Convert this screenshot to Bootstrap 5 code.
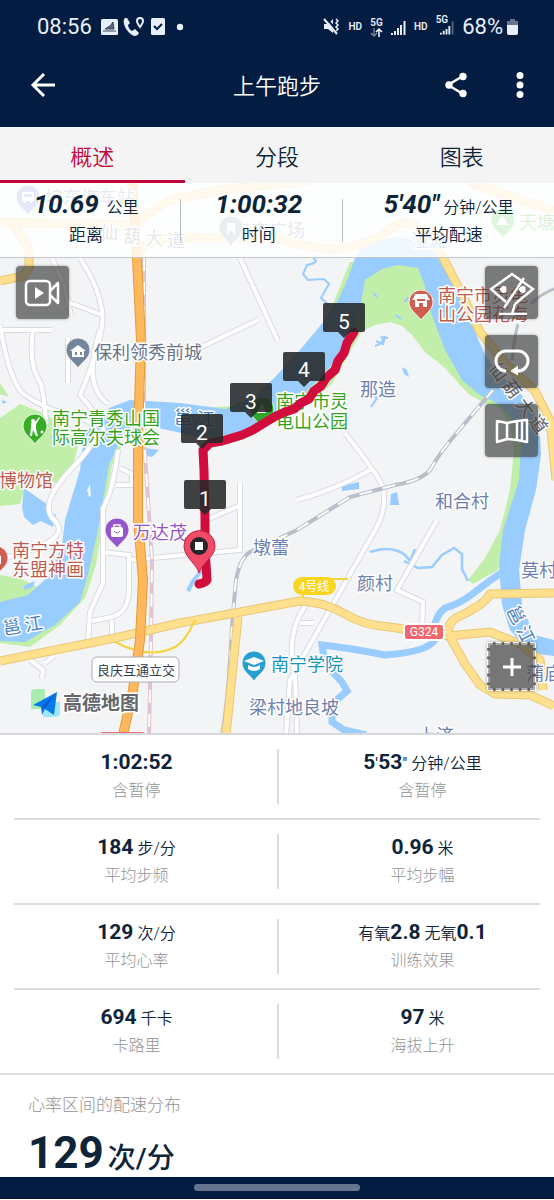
<!DOCTYPE html>
<html lang="zh-CN">
<head>
<meta charset="utf-8">
<meta name="viewport" content="width=device-width, initial-scale=1">
<title>上午跑步</title>
<link href="https://cdn.jsdelivr.net/npm/bootstrap@5.3.0/dist/css/bootstrap.min.css" rel="stylesheet">
<style>
:root{--navy:#021d41;--ink:#0e2439;--red:#c1073a}
body{font-family:Roboto,"Noto Sans CJK SC",sans-serif;color:var(--ink);background:#fff;line-height:1}
svg{display:block;flex:none}
button{color:inherit}
.top-area{background:var(--navy);color:#fff}
.status-line{height:54px;padding:0 36px 0 37px;color:#e8effa}
.clock{font-size:22px;line-height:24px}
.tiny{font-size:10px;line-height:10px;font-weight:600}
.second-signal{margin-left:-8px}
.app-line{height:73px;padding:0 25px 12px;display:grid;grid-template-columns:1fr auto 1fr}
.app-line h1{font-size:22px;line-height:28px;margin:0;padding-top:4px;font-weight:350}
.app-actions{gap:28px;margin-right:-9px}
.icon-btn{background:none;border:0;padding:0;width:36px;height:36px;display:flex;align-items:center;justify-content:center}
.tab-row{background:#f4f4f4;height:56px}
.tab-row button{background:none;border:0;border-bottom:3px solid transparent;font-size:22px;line-height:28px;padding:8px 0 0;font-weight:350}
.tab-row button.active{color:var(--red);border-color:var(--red)}
.map-box{background:#f3f4f6;border-bottom:2px solid #d6d8dc;overflow:hidden}
.map-box>svg{width:100%;height:auto}
.summary{background:rgba(255,255,255,.84);border-bottom:1px solid #c4c6ca;height:75px;padding-top:8px}
.sum-cell{position:relative;text-align:center}
.sum-cell+.sum-cell{border-image:linear-gradient(transparent 9px,#bbbec4 9px,#bbbec4 50px,transparent 50px) 1;border-left:1px solid}
.sum-cell b{font-size:26px;line-height:26px;font-style:italic;font-weight:700;display:inline-block}
.sum-cell p{font-size:17px;line-height:24px;margin:6px 0 0;font-weight:350}
.unit{font-size:16px;font-weight:350}
.c1{flex:0 0 32.5%;padding-right:8px}.c2{flex:0 0 29.3%;padding-right:6px}.c3{flex:1}
.tool{width:53px;height:53px;border:0;border-radius:4px;background:rgba(64,64,64,.68);color:#fff;padding:0;display:flex;align-items:center;justify-content:center;box-shadow:0 0 3px rgba(0,0,0,.35)}
.tools-left{left:16px;top:83px}
.tools-right{right:16px;top:83px;gap:16px}
.tool-add{right:18px;bottom:42px;width:49px;height:49px;border:3px dashed #fff;outline:2px solid rgba(80,80,80,.5);outline-offset:-3px;border-radius:2px;background:rgba(64,64,64,.7)}
.pair{margin:0 14px;border-bottom:2px solid #dcddde;padding:14px 0 14px}
.pair:last-child{margin:0;padding-left:14px;padding-right:14px}
.pair>div{width:50%;text-align:center;height:55px}
.pair>div+div{border-left:2px solid #dcddde}
.pair>div:first-child{padding-right:18px}
.pair>div:last-child{padding-left:26px}
.pair strong{font-size:21px;font-weight:700}
.pair .val{line-height:26px;height:28px}
.pair .cap{font-size:16px;line-height:24px;color:#949494;margin-top:2px;font-weight:300}
.zone{padding:18px 28px 0;height:102px;overflow:hidden}
.zone h2{font-size:17px;line-height:24px;color:#949494;font-weight:300;margin:0 0 8px}
.zone .big{font-size:44px;line-height:56px;font-weight:700}
.zone .big span{font-size:28px;font-weight:500;margin-left:4px}
.home-line{background:var(--navy);height:22px;border-bottom:1px solid #071229}
.home-line div{width:30%;height:7px;border-radius:4px;background:#66758f}
.lab{font-size:18px;paint-order:stroke;stroke:#fff;stroke-width:3px;stroke-linejoin:round;font-family:"Noto Sans CJK SC",sans-serif}
.vil{fill:#6d81b0}.poi{fill:#64758d}.parkc{fill:#34a31b}.sight{fill:#bd5a50}
.km{font-size:21px;fill:#fff;text-anchor:middle}
</style>
</head>
<body>
<header class="top-area">
 <div class="status-line d-flex align-items-center justify-content-between">
  <div class="d-flex align-items-center">
   <span class="clock me-2">08:56</span>
   <svg width="76" height="20" viewBox="98 17 76 20" aria-hidden="true">
    <rect x="99" y="19" width="17" height="16" rx="1.5" fill="#e8effa"/><path d="M101 31h13M103 29h9l-1-7-3 4-2 1z" stroke="#34445c" fill="#5b687b"/>
    <path d="M123 18c-4 4 2 15 9 18 3 0 4-1 5-3l-4-4-3 2c-2-1-4-4-4-6l2-2-3-5z" fill="#e8effa"/><path d="M138 18a3 3 0 0 1 3 3c0 2-3 6-3 6s-3-4-3-6a3 3 0 0 1 3-3z" fill="none" stroke="#e8effa" stroke-width="2"/>
    <rect x="149" y="18" width="14" height="17" rx="1.500" fill="#e8effa"/><path d="m152 26 3 3 5-5" fill="none" stroke="#021d41" stroke-width="2"/>
   </svg>
   <svg width="8" height="8" viewBox="0 0 8 8" aria-hidden="true"><circle cx="4" cy="4" r="3.200" fill="#e8effa"/></svg>
  </div>
  <div class="d-flex align-items-center">
   <svg width="17" height="18" viewBox="0 0 17 18" class="me-2" aria-hidden="true"><path d="M1 6h4l5-5v14l-5-4H1z" fill="#e8effa"/><path d="M3 0l13 15" stroke="#021d41" stroke-width="2"/><path d="M1 1l13 15" stroke="#e8effa" stroke-width="2"/><path d="M13 1l2 2-2 2 2 2-2 2 2 2-2 2" stroke="#e8effa" stroke-width="1.500" fill="none"/></svg>
   <span class="tiny me-2">HD</span>
   <span class="text-center me-2"><span class="tiny d-block">5G</span><svg width="13" height="9" viewBox="0 0 13 9" aria-hidden="true"><path d="M4 0v7M1 5l3 3 3-3" fill="none" stroke="#7888a0" stroke-width="1.300"/><path d="M9 9V2M6 4l3-3 3 3" fill="none" stroke="#fff" stroke-width="1.500"/></svg></span>
   <svg width="15" height="15" viewBox="0 0 15 15" class="me-2" aria-hidden="true"><path d="M1 13v2M4 11v4M7 8v7M10 5v10M13.500 1v14" stroke="#e8effa" stroke-width="2"/></svg>
   <span class="tiny me-2">HD</span>
   <span class="tiny align-self-start">5G</span>
   <svg width="14" height="15" viewBox="0 0 15 15" class="second-signal me-2" aria-hidden="true"><path d="M1 13v2M4 11v4M7 9v6M10 6v9" stroke="#e8effa" stroke-width="2"/><path d="M13.500 1v14" stroke="#53647f" stroke-width="2"/></svg>
   <span class="clock me-1">68%</span>
   <svg width="11" height="16" viewBox="0 0 11 16" aria-hidden="true"><path d="M3 0h5v2h3v6H0V2h3z" fill="#66758d"/><path d="M0 6h11v8q0 2-2 2H2q-2 0-2-2z" fill="#e8effa"/></svg>
  </div>
 </div>
 <nav class="app-line align-items-center">
  <button class="icon-btn" aria-label="返回"><svg width="26" height="26" viewBox="0 0 26 26" fill="none" stroke="#fff" stroke-width="3"><path d="M25 13H3M14 2 3 13l11 11"/></svg></button>
  <h1>上午跑步</h1>
  <div class="app-actions d-flex justify-content-end">
   <button class="icon-btn" aria-label="分享"><svg width="24" height="26" viewBox="0 0 24 26"><path d="M19 4 4 13l15 9" stroke="#fff" stroke-width="2.500" fill="none"/><circle cx="19" cy="4.500" r="3.700" fill="#fff"/><circle cx="5" cy="13" r="3.700" fill="#fff"/><circle cx="19" cy="21.500" r="3.700" fill="#fff"/></svg></button>
   <button class="icon-btn" aria-label="更多"><svg width="8" height="26" viewBox="0 0 8 26" fill="#fff"><circle cx="4" cy="3.600" r="3.500"/><circle cx="4" cy="13" r="3.500"/><circle cx="4" cy="22.400" r="3.500"/></svg></button>
  </div>
 </nav>
</header>
<div class="tab-row d-flex" role="tablist">
 <button class="flex-fill w-100 active" role="tab" aria-selected="true">概述</button>
 <button class="flex-fill w-100" role="tab">分段</button>
 <button class="flex-fill w-100" role="tab">图表</button>
</div>
<main>
<section class="map-box position-relative">
<svg viewBox="0 183 554 550" role="img" aria-label="跑步路线地图">
 <defs>
  <path id="drop" d="M0 17C-4 11-12 7-12-1A12 12 0 0 1 12-1C12 7 4 11 0 17z"/>
  <path id="flag" d="M-19-15h38a2 2 0 0 1 2 2V12a2 2 0 0 1-2 2H6L0 20-6 14H-19a2 2 0 0 1-2-2V-13a2 2 0 0 1 2-2z" fill="#242729" fill-opacity=".88"/>
 </defs>
 <!-- parks -->
 <g fill="#c1efaa">
  <path d="M0 383 9 397-1 394zM0 418 20 404 48 415 79 442 72 470 62 484 40 480 24 492 20 504 0 506zM0 575l20 3 25 13-15 8-30 3z"/>
  <path d="M140 412 150 423 200 438 245 437 277 420 310 402 332 384 350 352 362 331 375 325 390 322 402 326 412 335 425 352 445 368 460 385 470 395 485 403 500 408 510 425 514 450 510 490 500 530 485 558 468 580 473 584 498 570 503 540 526 470 520 410 480 390 445 340 430 275 420 262 350 262 300 385 250 405z"/>
  <path d="M122 445 112 465 106 500 103 520 96 565 85 598 60 625 30 647 0 643 0 630 60 600 82 540 95 450z"/>
 </g>
 <!-- rivers -->
 <g fill="#99ccff">
  <path d="M355 258Q365 240 390 238T428 246L440 256 452 275 463 305 472 325 485 355 500 375 520 393 534 412 540 435 541 455 536 490 525 530 519 570 522 605 534 635 554 640V656L530 653 510 630 502 605 499 565 503 530 519 480 521 445 510 415 495 402 480 395 462 380 445 350 430 310 424 283 418 268 398 265 382 269 365 280 361 303 352 332 330 367 300 398 275 415 240 433 204 438 172 431 150 426 137 421 123 434 117 447 109 465 103 500 98 530 88 575 80 602 55 625 25 642 0 641V602L28 595 50 575 62 545 65 520 80 470 84 435 109 408 130 400 180 403 225 409 255 397 277 375 300 350 325 320 338 300 348 278z"/>
  <path d="m24 488 11 8 12 8 1 12 8-2-3 13-12-6-8 4-9-8-2-10zM62 435l-8-4-4 8zM2 400l5 2-4 2zM145 448l14 2-7 7-6-1zM342 486l17-4v7l-17 2zM391 494l6-2 2 13h-9zM402 367l5 3 2 7-5-3zM23 586l12-5-2 6-8 3z"/>
 </g>
 <path d="M90 484l-3 6 2 7 2-1z" fill="#f3f4f6"/>
 <g fill="none" stroke="#99ccff">
  <path d="M504 571Q490 580 475 592T445 608Q432 618 434 641Q426 652 385 655Q350 648 322 645L325 664 342 682 347 691 332 704 332 722 344 730 366 735" stroke-width="7"/>
  <path d="M313 258q8 4-6 7l-4 9 5 6 16-1 5 5-8 14 8 7" stroke-width="2"/>
  <path d="M370 552q22-7 35 3l5 6 5-12M404 561l14 7 14-1 10-12 12-7 8 6v15l6 12" stroke-width="2.500"/>
  <path d="M203 569l-10 12-5 10" stroke-width="4"/>
  <path d="M373 293l4 4M408 297l-3 5M396 315l5 4M376 341l7 3 2-8M375 346q10-3 7-9l6 1M371 407l6-9-5-3" stroke-width="2"/>
 </g>
 <!-- local streets -->
 <g fill="none" stroke="#d8dbe3" stroke-width="6">
  <path d="M0 325Q8 375 22 393Q45 410 79 418T75 465 54 520 30 550 0 560M52 258l12 27 7 30M80 258Q98 285 102 310T80 395Q98 415 104 430M0 330h52M33 330q-5 35 8 54 4 18 5 40M68 338v45M102 315l-34-13M100 330q-18 55 8 74M195 350 258 320M240 258l38 83M118 450q-5 42-15 58v75L90 612 88 640M120 468l12 6v11h-16M103 552l26 3v38q-2 20-17 24l-20 4M130 560l110-10V483M206 520l35-15M112 620v16M345 433q25 32 35 48 12 24-10 58L290 680l-4 55M370 470q-35 20-73 30M437 520l-40 70 26 12-1 27M305 606q-20 30-10 70l2 58M300 623h14M30 660l13 10-1 8M55 655l-10 8"/>
 </g>
 <g fill="none" stroke="#fff" stroke-width="4">
  <path d="M0 325Q8 375 22 393Q45 410 79 418T75 465 54 520 30 550 0 560M52 258l12 27 7 30M80 258Q98 285 102 310T80 395Q98 415 104 430M0 330h52M33 330q-5 35 8 54 4 18 5 40M68 338v45M102 315l-34-13M100 330q-18 55 8 74M195 350 258 320M240 258l38 83M118 450q-5 42-15 58v75L90 612 88 640M120 468l12 6v11h-16M103 552l26 3v38q-2 20-17 24l-20 4M130 560l110-10V483M206 520l35-15M112 620v16M345 433q25 32 35 48 12 24-10 58L290 680l-4 55M370 470q-35 20-73 30M437 520l-40 70 26 12-1 27M305 606q-20 30-10 70l2 58M300 623h14M30 660l13 10-1 8M55 655l-10 8"/>
 </g>
 <!-- railways -->
 <g fill="none">
  <path d="M222 735Q228 700 230 660T236 580Q240 558 250 552L297 530 350 497 395 485Q425 480 432 467T455 435 493 390" stroke="#b9bec9" stroke-width="4"/>
  <path d="M222 735Q228 700 230 660T236 580Q240 558 250 552L297 530 350 497 395 485Q425 480 432 467T455 435 493 390" stroke="#fff" stroke-width="2" stroke-dasharray="13 11"/>
  <path d="M512 360q2-22 6-36M531 304q10-10 23-15" stroke="#b9bec9" stroke-width="3"/>
  <path d="M144 258V440L152 560 151 640 149 735" stroke="#e0c4d0" stroke-width="4"/>
  <path d="M144 258V440L152 560 151 640 149 735" stroke="#fff" stroke-width="2" stroke-dasharray="13 11"/>
 </g>
 <!-- main roads -->
 <g fill="none" stroke-linejoin="round">
  <path id="avenues" d="M0 661 115 638 180 623 300 601Q325 602 345 614T390 627L448 636 490 632 520 644 540 660 543 690M448 636Q447 622 458 617T478 606 490 594L554 593M450 637 465 664 480 685 495 694 530 695 554 706M238 617 226 735M0 281l23-5 6-8V250L14 225M428 237 440 252 460 290 480 332 507 365 535 391 550 420 556 480M0 222l130 3 40-25 50-10 90-9M137 258q5-18 33-20H277Q320 252 345 248T390 229 428 237M470 183l84 28" stroke="#e8c878" stroke-width="9"/>
  <path d="M0 661 115 638 180 623 300 601Q325 602 345 614T390 627L448 636 490 632 520 644 540 660 543 690M448 636Q447 622 458 617T478 606 490 594L554 593M450 637 465 664 480 685 495 694 530 695 554 706M238 617 226 735M0 281l23-5 6-8V250L14 225M428 237 440 252 460 290 480 332 507 365 535 391 550 420 556 480M0 222l130 3 40-25 50-10 90-9M137 258q5-18 33-20H277Q320 252 345 248T390 229 428 237M470 183l84 28" stroke="#ffe08e" stroke-width="7"/>
  <path d="M115 642q35 18 60 5 10-5 20-27M302 598l4-10M330 579h18" stroke="#f4d43c" stroke-width="2"/>
  <path d="M132 183 137 258 141 340 138 440 138 520 143 580 140 640 133 690 123 735" stroke="#e49b3c" stroke-width="10"/>
  <path d="M132 183 137 258 141 340 138 440 138 520 143 580 140 640 133 690 123 735" stroke="#ffb85b" stroke-width="8"/>
 </g>
 <!-- place labels -->
 <g class="lab">
  <g class="poi"><text x="94" y="359">保利领秀前城</text><text x="233" y="237">东市广场</text></g>
  <g fill="#5b77b2"><text x="45" y="204">埌东汽车站</text></g>
  <g class="vil"><text x="360" y="396">那造</text><text x="435" y="508">和合村</text><text x="253" y="554">墩蕾</text><text x="357" y="590">颜村</text><text x="521" y="577">莫村</text><text x="249" y="714">梁村地良坡</text><text x="418" y="742">上济</text><text x="526" y="680">蒲庙</text></g>
  <g class="parkc"><text x="52" y="425">南宁青秀山国</text><text x="52" y="444">际高尔夫球会</text><text x="276" y="408">南宁市灵</text><text x="276" y="428">龟山公园</text><text x="519" y="229">天塘岭</text></g>
  <g class="sight"><text x="438" y="302">南宁市灵龟</text><text x="438" y="321">山公园花海</text><text x="-1" y="487">博物馆</text><text x="12" y="557">南宁方特</text><text x="12" y="576">东盟神画</text></g>
  <text x="133" y="539" fill="#9354c6">万达茂</text><text x="271" y="671" fill="#1593b8">南宁学院</text>
  <g fill="#5d6574"><text x="100 123 145 167" y="239 243 245 247">仙葫大道</text><text transform="translate(488 368) rotate(53)" x="0 22 45 66">仙葫大道</text></g>
  <g fill="#457fc0"><text x="174" y="424">邕</text><text x="197" y="426">江</text><text transform="translate(4 635) rotate(-9)">邕 江</text><text transform="translate(506 610) rotate(63)">邕 江</text><text x="411" y="247">湴滩</text></g>
 </g>
 <g font-size="14" text-anchor="middle">
  <rect x="293" y="577" width="43" height="18" rx="9" fill="#f9d420"/><text x="314" y="591" font-size="12" fill="#fff">4号线</text>
  <rect x="404" y="624" width="40" height="16" rx="3" fill="#ef6870" stroke="#fff" stroke-width="2"/><text x="424" y="636" font-size="12" fill="#fff">G324</text>
  <rect x="92" y="657" width="87" height="25" rx="5" fill="#fff" stroke="#a9acb4"/><text x="136" y="675" font-size="13" fill="#333c4c">良庆互通立交</text>
  <rect x="100" y="732" width="45" height="12" rx="3" fill="#e67179"/>
 </g>
 <!-- place pins -->
 <g stroke="#fff" stroke-opacity=".8">
  <use href="#drop" x="28" y="198" fill="#5d7fd0"/><use href="#drop" x="231" y="229" fill="#8393a8"/><use href="#drop" x="503" y="221" fill="#3dbd39"/><use href="#drop" x="78" y="351" fill="#74869c"/><use href="#drop" x="35" y="427" fill="#35ad24"/><use href="#drop" x="421" y="303" fill="#cf5d50"/><use href="#drop" x="-4" y="559" fill="#cf5d50"/><use href="#drop" x="117" y="531" fill="#9656cb"/><use href="#drop" x="254" y="664" fill="#299ed2"/><use href="#drop" x="262" y="410" fill="#30a72a"/>
 </g>
 <g fill="#fff">
  <path d="M22 192h12v9h-2v2h-2v-2h-4v2h-2v-2h-2zM227 234v-11h8v11h-2v-3h-4v3zM496 225l6-9 7 9zM70 351l8-6 8 6h-2v6H72v-6zM412 300l2-3 1-3h12l1 3 2 3h-3v7h-4v-4h-4v4h-4v-7zM-3 554l4 2v8h-4zM257 413l5-10 4 10zM244 661l10-4 10 4-10 4zM248 665q6 4 12 0v4q-6 4-12 0z"/>
  <circle cx="33" cy="421" r="2"/><path d="M31 423l4-1 4-5 1 1-4 6v5l2 7h-2l-3-6-1 6h-2l1-9z"/><circle cx="42" cy="432" r="1.500"/>
  <rect x="111" y="527" width="12" height="10" rx="2"/><path d="M114 528v-3h6v3" fill="none" stroke="#fff" stroke-width="1.500"/><path d="M114 531q3 4 6 0" fill="none" stroke="#9656cb"/>
  <path d="M24 194h8v3h-8z" fill="#5d7fd0"/><path d="M75 352h2v3h-2zM80 352h2v3h-2z" fill="#74869c"/><path d="M417 299h8v2h-8z" fill="#cf5d50"/>
 </g>
 <!-- running route -->
 <path d="M354 332 347 343 344 353 338 361 335 370 326 378 321 386 314 391 309 399 301 403 294 409 285 412 276 416 266 422 253 430 242 435 222 441 210 443 203 450 204 470 205 518 205 548 207 580Q205 583 199 584" fill="none" stroke="#d00d3d" stroke-width="9" stroke-linecap="round" stroke-linejoin="round"/>
 <use href="#flag" x="205" y="495"/><use href="#flag" x="202" y="429"/><use href="#flag" x="251" y="398"/><use href="#flag" x="304" y="367"/><use href="#flag" x="344" y="318"/>
 <g class="km"><text x="205" y="506">1</text><text x="202" y="440">2</text><text x="251" y="409">3</text><text x="304" y="377">4</text><text x="344" y="329">5</text></g>
 <path d="M199 573C196 563 184 557 184 546A15.500 15.500 0 0 1 215 546C215 557 202 563 199 573z" fill="#f04b69" stroke="#bb2947"/><circle cx="199" cy="546" r="9" fill="#282528"/><rect x="195" y="542" width="8" height="8" fill="#fff"/>
 <!-- map provider mark -->
 <path d="M31 693q0-4 4-4h10v20H31z" fill="#a9eeb0"/><path d="M44 702h16v10q0 5-5 5H43z" fill="#9fe8fa"/><path d="M33 705 57 692 54 715 45 709 42 715 41 707z" fill="#0879ed"/><path d="M41 707 57 692 45 709z" fill="#0a5fd0"/>
 <text x="63" y="710" font-size="19" font-weight="700" fill="#65676c" stroke="#fff" stroke-width="3" paint-order="stroke">高德地图</text>
</svg>
<div class="summary position-absolute top-0 start-0 w-100 d-flex">
 <div class="sum-cell c1"><b>10.69</b> <span class="unit ms-1">公里</span><p>距离</p></div>
 <div class="sum-cell c2"><b>1:00:32</b><p>时间</p></div>
 <div class="sum-cell c3"><b>5'40"</b> <span class="unit">分钟/公里</span><p>平均配速</p></div>
</div>
<div class="tools-left position-absolute"><button class="tool" aria-label="轨迹视频"><svg width="37" height="28" viewBox="0 0 37 28" fill="none" stroke="#fff" stroke-width="2.500"><rect x="2" y="2" width="24" height="24" rx="4"/><path d="m26 12 8-8v20l-8-8" stroke-linejoin="round"/><path d="M11 8v12l9-6z" fill="#fff" stroke="none"/></svg></button></div>
<div class="tools-right position-absolute d-flex flex-column">
 <button class="tool" aria-label="隐藏地图"><svg width="46" height="44" viewBox="0 0 46 44" fill="none" stroke="#fff" stroke-width="2.500"><path d="M17 31 2 18 23 3 44 18 26 33M35 7 15 37M10 43h28M26 33l-3 10"/><path d="M11 18q2-4 6-2v5q-4 2-6-3zM30 18q2-4 6-2v5q-4 2-6-3z" fill="#fff" stroke-width="1"/></svg></button>
 <button class="tool" aria-label="轨迹回放"><svg width="36" height="28" viewBox="0 0 36 28" fill="none" stroke="#fff" stroke-width="3"><path d="M12 23A10 10 0 0 1 12 3H24A10 10 0 0 1 24 23H20"/><path d="m24 18-7 5 7 4" fill="#fff" stroke-width="1"/></svg></button>
 <button class="tool" aria-label="地图样式"><svg width="34" height="26" viewBox="0 0 34 26" fill="none" stroke="#fff" stroke-width="2.500" stroke-linejoin="round"><path d="M2 3 12 5 22 3 32 2V24L22 22 12 21 2 24zM12 5V21M22 3V22M27 3v19"/></svg></button>
</div>
<button class="tool tool-add position-absolute" aria-label="放大"><svg width="18" height="18" viewBox="0 0 18 18" stroke="#fff" stroke-width="3"><path d="M9 0v18M0 9h18"/></svg></button>
</section>
<section>
 <div class="pair d-flex"><div><div class="val"><strong>1:02:52</strong></div><div class="cap">含暂停</div></div><div><div class="val"><strong>5</strong>'<strong>53</strong>" <span class="unit">分钟/公里</span></div><div class="cap">含暂停</div></div></div>
 <div class="pair d-flex"><div><div class="val"><strong>184</strong> <span class="unit">步/分</span></div><div class="cap">平均步频</div></div><div><div class="val"><strong>0.96</strong> <span class="unit">米</span></div><div class="cap">平均步幅</div></div></div>
 <div class="pair d-flex"><div><div class="val"><strong>129</strong> <span class="unit">次/分</span></div><div class="cap">平均心率</div></div><div><div class="val"><span class="unit">有氧</span><strong>2.8</strong> <span class="unit">无氧</span><strong>0.1</strong></div><div class="cap">训练效果</div></div></div>
 <div class="pair d-flex"><div><div class="val"><strong>694</strong> <span class="unit">千卡</span></div><div class="cap">卡路里</div></div><div><div class="val"><strong>97</strong> <span class="unit">米</span></div><div class="cap">海拔上升</div></div></div>
</section>
<section class="zone"><h2>心率区间的配速分布</h2><div class="big">129<span>次/分</span></div></section>
</main>
<footer class="home-line d-flex justify-content-center align-items-center"><div></div></footer>
<script src="https://cdn.jsdelivr.net/npm/bootstrap@5.3.0/dist/js/bootstrap.bundle.min.js"></script>
</body>
</html>
